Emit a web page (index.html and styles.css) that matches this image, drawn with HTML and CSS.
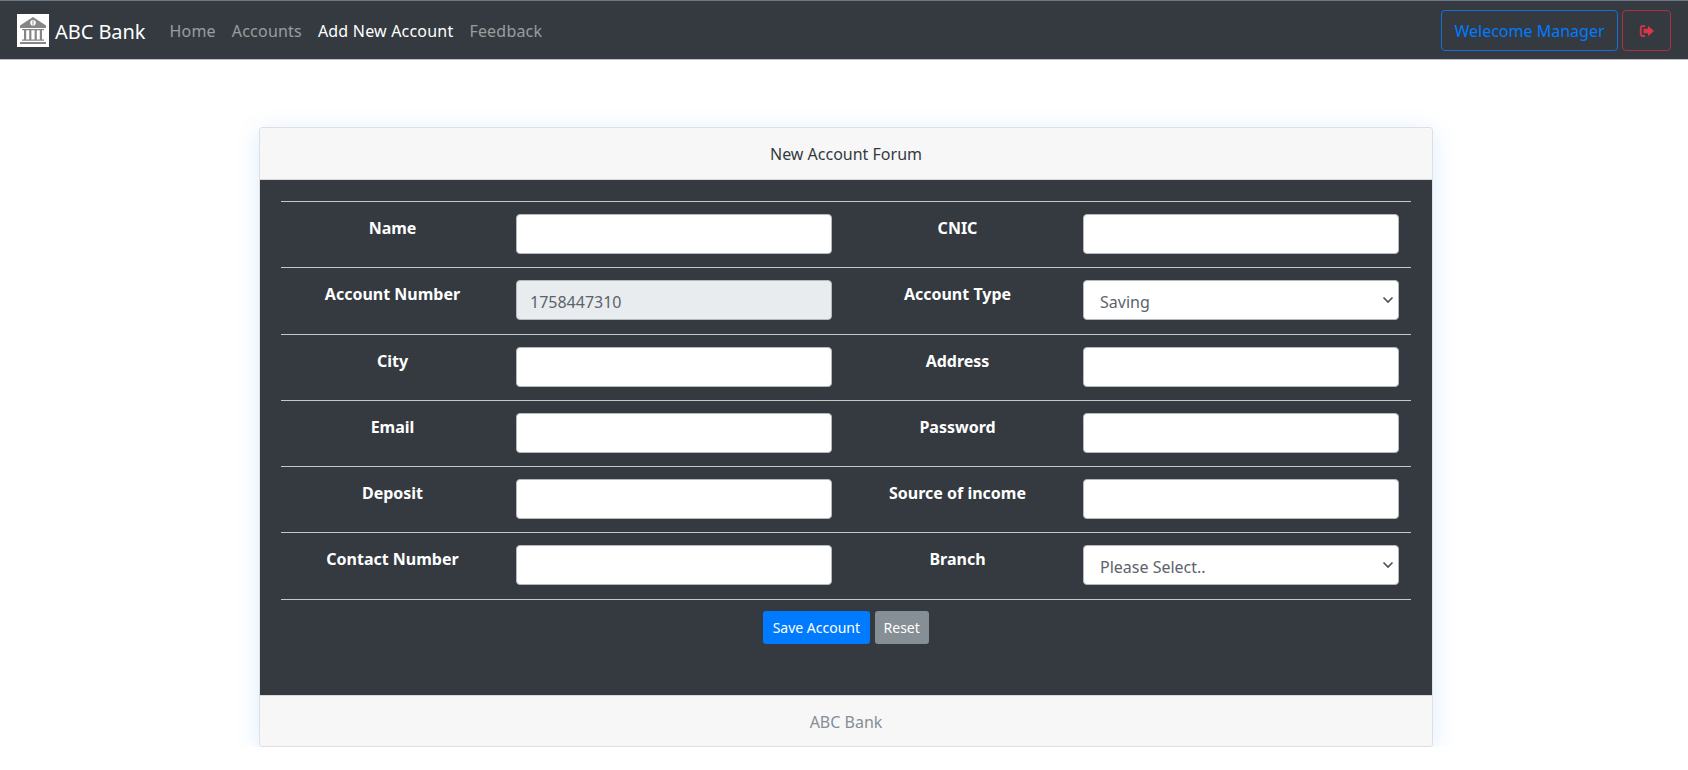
FILE: index.html
```html
<!DOCTYPE html>
<html lang="en">
<head>
  <meta charset="UTF-8">
  <title>ABC Bank</title>
  <link rel="stylesheet" href="styles.css">
</head>
<body>
  <nav class="navbar">
    <a class="brand" href="#">
      <svg class="logo" viewBox="0 0 32 33" aria-hidden="true">
        <rect width="32" height="33" fill="#fff"/>
        <path d="M16 3 L29 11.5 V14 H3 V11.5 Z" fill="#868686"/>
        <circle cx="16" cy="8.7" r="2.8" fill="#fff"/>
        <path d="M15.5 6.6 H16.5 V10.8 H15.5 Z" fill="#868686"/>
        <path d="M5 15 H27 V16.2 H5 Z M7 16.2 H9.2 V25.5 H7 Z M12.2 16.2 H14.4 V25.5 H12.2 Z M17.6 16.2 H19.8 V25.5 H17.6 Z M22.8 16.2 H25 V25.5 H22.8 Z M5 25.5 H27 V26.8 H5 Z M3 28 H29 V30 H3 Z" fill="#868686"/>
      </svg>
      <span class="brand-name">ABC Bank</span>
    </a>
    <ul class="nav-links">
      <li><a href="#">Home</a></li>
      <li><a href="#">Accounts</a></li>
      <li><a class="active" href="#">Add New Account</a></li>
      <li><a href="#">Feedback</a></li>
    </ul>
    <div class="nav-right">
      <button class="btn-outline btn-welcome">Welecome Manager</button>
      <button class="btn-outline btn-logout" aria-label="Logout">
        <svg viewBox="0 0 16 14" width="16" height="14" aria-hidden="true">
          <path d="M6 2 H3.5 A1.7 1.7 0 0 0 1.8 3.7 V10.3 A1.7 1.7 0 0 0 3.5 12 H6" fill="none" stroke="#d0344a" stroke-width="1.9"/>
          <path d="M9 1.8 L15 7 L9 12.2 V9.2 H4.6 V4.8 H9 Z" fill="#dc3545"/>
        </svg>
      </button>
    </div>
  </nav>

  <main class="card">
    <div class="card-header">New Account Forum</div>
    <div class="card-body">
      <form>
        <table class="form-table">
          <colgroup>
            <col class="col-label-1">
            <col class="col-field-1">
            <col class="col-label-2">
            <col>
          </colgroup>
          <tr>
            <th>Name</th><td><input type="text"></td>
            <th>CNIC</th><td><input type="text"></td>
          </tr>
          <tr>
            <th>Account Number</th><td><input type="text" value="1758447310" disabled></td>
            <th>Account Type</th><td><select><option>Saving</option><option>Current</option></select></td>
          </tr>
          <tr>
            <th>City</th><td><input type="text"></td>
            <th>Address</th><td><input type="text"></td>
          </tr>
          <tr>
            <th>Email</th><td><input type="text"></td>
            <th>Password</th><td><input type="password"></td>
          </tr>
          <tr>
            <th>Deposit</th><td><input type="text"></td>
            <th>Source of income</th><td><input type="text"></td>
          </tr>
          <tr>
            <th>Contact Number</th><td><input type="text"></td>
            <th>Branch</th><td><select><option>Please Select..</option></select></td>
          </tr>
        </table>
        <div class="form-actions">
          <button type="submit" class="btn btn-primary">Save Account</button>
          <button type="reset" class="btn btn-secondary">Reset</button>
        </div>
      </form>
    </div>
    <div class="card-footer">ABC Bank</div>
  </main>
</body>
</html>
```

FILE: styles.css
```css
* {
  box-sizing: border-box;
}

body {
  margin: 0;
  background: #fff;
  color: #212529;
  font-family: "Noto Sans", "Open Sans", sans-serif;
  font-size: 16px;
}

a {
  text-decoration: none;
}

.navbar {
  display: flex;
  align-items: center;
  height: 60px;
  padding: 0 17px 0 17px;
  background: #343a40;
  border-top: 1px solid #6f7686;
  border-bottom: 1px solid #bfc2c5;
}

.brand {
  display: flex;
  align-items: center;
  gap: 6px;
  color: #fff;
  font-size: 20px;
  margin-right: 16px;
}

.brand-name {
  padding-top: 2px;
  letter-spacing: -0.05px;
}

.logo {
  width: 32px;
  height: 33px;
}

.nav-links {
  display: flex;
  list-style: none;
  margin: 0;
  padding: 0;
}

.nav-links a {
  display: block;
  padding: 9px 8px 7px;
  color: rgba(255, 255, 255, 0.5);
  letter-spacing: 0.2px;
}

.nav-links a.active {
  color: #fff;
}

.nav-right {
  display: flex;
  gap: 4px;
  margin-left: auto;
}

.btn-outline {
  height: 41px;
  padding-top: 2px;
  background: transparent;
  border-radius: 4px;
  font: inherit;
}

.btn-welcome {
  width: 177px;
  border: 1px solid #1670d6;
  color: #007bff;
}

.btn-logout {
  display: flex;
  align-items: center;
  justify-content: center;
  width: 49px;
  border: 1px solid #a93243;
}

.card {
  width: 1174px;
  margin: 67px 0 0 259px;
  background: #fff;
  border: 1px solid rgba(0, 0, 0, 0.125);
  border-radius: 4px;
  box-shadow: 0 4px 24px rgba(0, 123, 255, 0.14);
  overflow: hidden;
}

.card-header {
  height: 52px;
  line-height: 53px;
  text-align: center;
  color: #343a40;
  background: #f7f7f7;
  border-bottom: 1px solid rgba(0, 0, 0, 0.125);
}

.card-body {
  height: 515px;
  padding: 21px 21px 20px 21px;
  background: #343a40;
}

.form-table {
  width: 100%;
  border-collapse: collapse;
  table-layout: fixed;
  color: #fff;
}

.col-label-1 {
  width: 223px;
}

.col-field-1 {
  width: 340px;
}

.col-label-2 {
  width: 227px;
}

.form-table tr {
  border-top: 1px solid #c4c7ca;
  border-bottom: 1px solid #c4c7ca;
}

.form-table th,
.form-table td {
  padding: 12px 12px 13.25px;
  vertical-align: top;
}

.form-table th {
  padding-top: 15px;
  font-weight: 700;
  text-align: center;
}

.form-table input,
.form-table select {
  display: block;
  width: 100%;
  height: 40px;
  padding: 8px 12px 4px 13px;
  background-color: #fff;
  border: 1px solid #b4b9be;
  border-radius: 4px;
  color: #5c636a;
  font: inherit;
}

.form-table select {
  appearance: none;
  padding-left: 16px;
  background-image: url("data:image/svg+xml,%3Csvg xmlns='http://www.w3.org/2000/svg' width='12' height='8'%3E%3Cpath d='M1.5 1.5 L6 6 L10.5 1.5' fill='none' stroke='%23495057' stroke-width='1.6'/%3E%3C/svg%3E");
  background-repeat: no-repeat;
  background-position: right 4px center;
}

.form-table input:disabled {
  background: #e9ecef;
}

.form-actions {
  display: flex;
  justify-content: center;
  gap: 5px;
  margin-top: 11px;
}

.btn {
  height: 33px;
  padding: 0 8px;
  border: 1px solid transparent;
  border-radius: 3px;
  color: #fff;
  font: inherit;
  font-size: 14px;
}

.btn-primary {
  padding: 0 8.5px;
  background: #007bff;
}

.btn-secondary {
  background: #868e96;
}

.card-footer {
  height: 51px;
  line-height: 53px;
  text-align: center;
  color: #868e96;
  background: #f7f7f7;
  border-top: 1px solid rgba(0, 0, 0, 0.125);
}
```
